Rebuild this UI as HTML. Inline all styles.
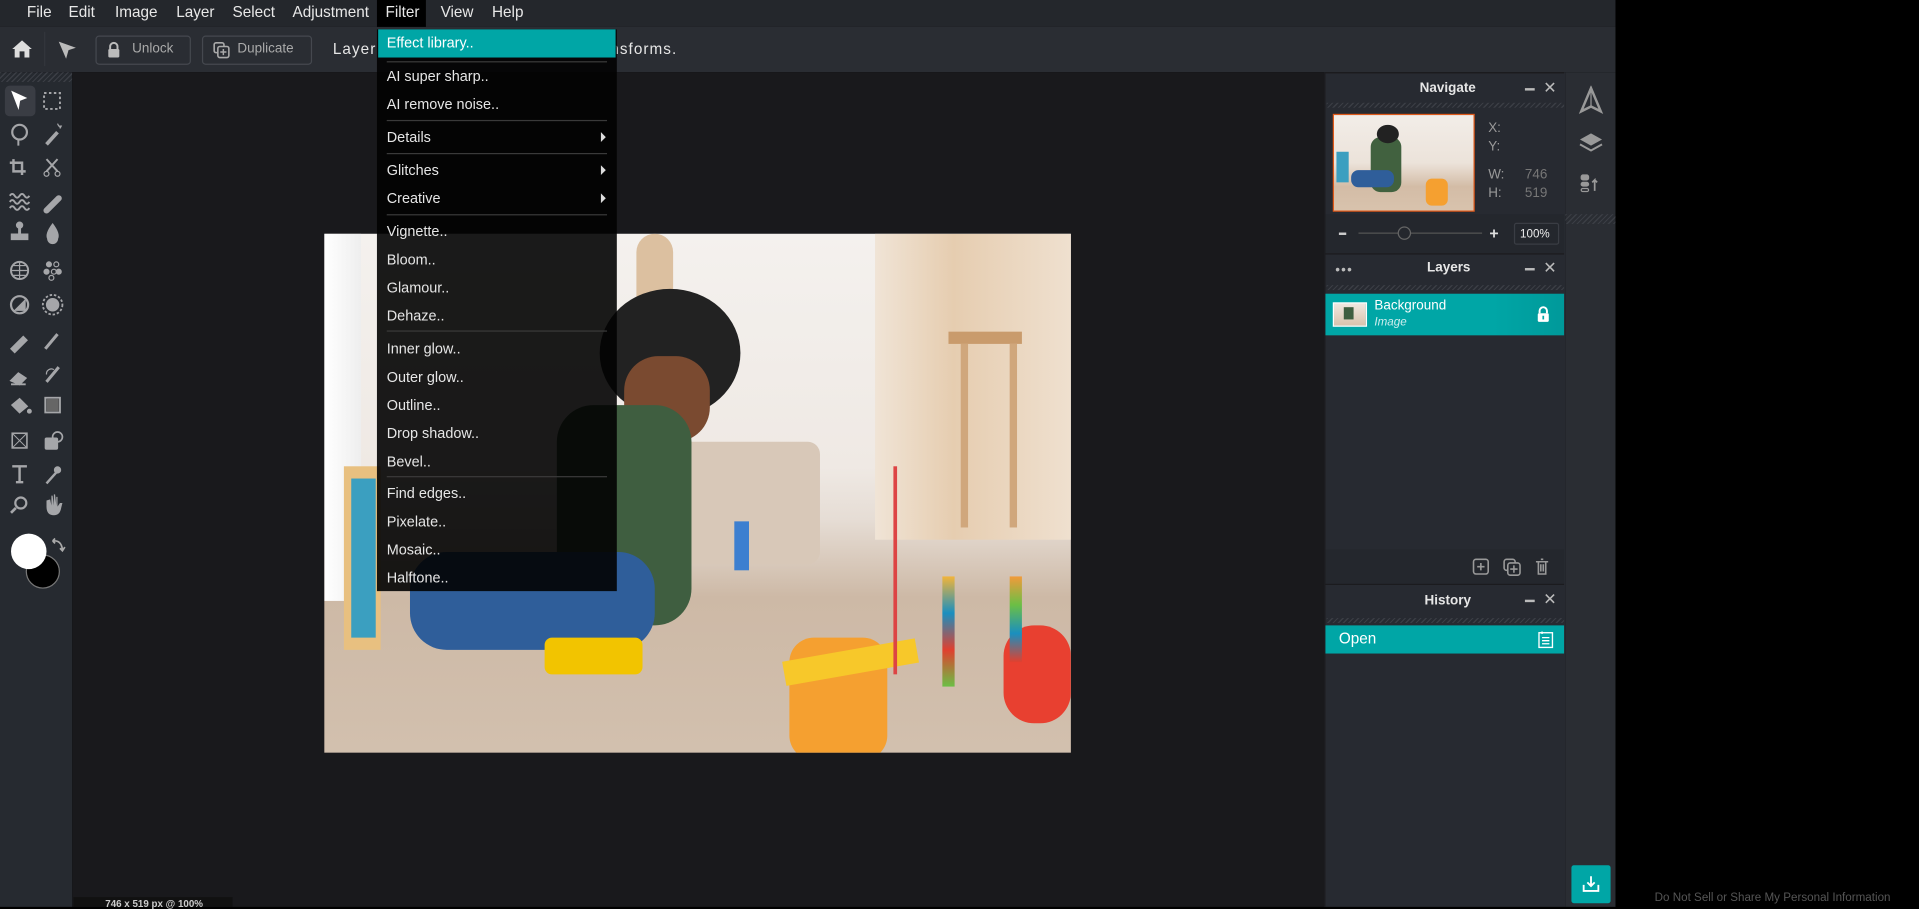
<!DOCTYPE html>
<html><head><meta charset="utf-8"><style>
*{margin:0;padding:0;box-sizing:border-box}
html,body{width:1919px;height:906px;overflow:hidden;background:#000}
#s{position:absolute;left:0;top:0;width:1568px;height:741px;transform:scale(1.22385);transform-origin:0 0;font-family:"Liberation Sans",sans-serif;color:#ddd;background:#000}
.a{position:absolute}
.menu span{position:absolute;top:3px;font-size:12.5px;color:#e8e8e8}
.fm div.i{position:absolute;left:8px;font-size:11.8px;color:#e6e6e6}
.fm .sep{position:absolute;left:8px;right:8px;height:1px;background:#3a3a3a}
.fm .ar{position:absolute;right:9px;width:0;height:0;border-left:4px solid #ddd;border-top:4px solid transparent;border-bottom:4px solid transparent}
.hatch{background:repeating-linear-gradient(135deg,#3b3e45 0 1px,transparent 1px 3px)}
.ph{position:absolute;font-size:11px;font-weight:bold;color:#e6e6e6}
</style></head><body><div id="s">
<div class="a menu" style="left:0;top:0;width:1320px;height:22px;background:#24272c">
<span style="left:22px">File</span><span style="left:56px">Edit</span><span style="left:94px">Image</span><span style="left:144px">Layer</span><span style="left:190px">Select</span><span style="left:239px">Adjustment</span>
<div class="a" style="left:308px;top:0;width:40px;height:24px;background:#000"></div><span style="left:315px">Filter</span><span style="left:360px">View</span><span style="left:402px">Help</span></div>
<div class="a" style="left:0;top:22px;width:1320px;height:37px;background:#2a2d33"></div>
<svg class="a" style="left:9px;top:31px" width="18" height="18" viewBox="0 0 18 18"><path d="M9 2L1 9h2v7h4v-5h4v5h4V9h2z" fill="#ddd"/></svg>
<div class="a" style="left:36px;top:26px;width:1px;height:28px;background:#33363c"></div>
<svg class="a" style="left:46px;top:32px" width="18" height="18" viewBox="0 0 18 18"><path d="M2 2l14 5-6 2-2 7z" fill="#bbb"/></svg>
<div class="a" style="left:78px;top:29px;width:78px;height:24px;border:1.5px solid #45484f;border-radius:3px"></div>
<svg class="a" style="left:87px;top:34px" width="12" height="14" viewBox="0 0 12 14"><path d="M3 6V4a3 3 0 016 0v2" stroke="#bbb" stroke-width="1.6" fill="none"/><rect x="1.5" y="6" width="9" height="7" rx="1" fill="#bbb"/></svg>
<div class="a" style="left:108px;top:34px;font-size:11px;color:#aaa">Unlock</div>
<div class="a" style="left:165px;top:29px;width:90px;height:24px;border:1.5px solid #45484f;border-radius:3px"></div>
<svg class="a" style="left:174px;top:34px" width="14" height="14" viewBox="0 0 14 14"><rect x="1" y="1" width="8" height="8" rx="1.5" stroke="#aaa" fill="none" stroke-width="1.3"/><rect x="4" y="4" width="9" height="9" rx="1.5" stroke="#aaa" fill="#2a2d33" stroke-width="1.3"/><path d="M8.5 6v5M6 8.5h5" stroke="#aaa" stroke-width="1.2"/></svg>
<div class="a" style="left:194px;top:34px;font-size:11px;color:#aaa">Duplicate</div>
<div class="a" style="left:272px;top:33px;font-size:12.5px;color:#e6e6e6;letter-spacing:0.85px">Layer is locked. Unlock layer for transforms.</div>
<div class="a" style="left:0;top:59px;width:59px;height:682px;background:#262a30"></div>
<div class="a hatch" style="left:0;top:59px;width:59px;height:8px"></div>
<div class="a" style="left:59px;top:59px;width:1024px;height:682px;background:#19191c"></div>
<div class="a" style="left:4px;top:70px;width:25px;height:25px;background:#3a3d44;border-radius:4px"></div>
<svg class="a" style="left:0;top:66px" width="59" height="430" viewBox="0 0 59 430" fill="#a5a6a9" stroke="#a5a6a9">
<path d="M10 9l11 5-5 2-1 6z" fill="#fff" stroke="#fff"/>
<rect x="36" y="10" width="13" height="13" fill="none" stroke-dasharray="2 2" stroke-width="1.6"/>
<circle cx="16" cy="42" r="6" fill="none" stroke-width="1.8"/><path d="M15 48v5" stroke-width="1.6"/>
<path d="M38 52l9-10" stroke-width="3"/><path d="M47 35l1 2 2 0-1 2" stroke-width="1"/>
<path d="M11 64v10h10M8 67h10v10" fill="none" stroke-width="2"/>
<path d="M38 64l9 10M47 64l-9 10" stroke-width="1.6"/><circle cx="38" cy="76" r="2" fill="none"/><circle cx="47" cy="76" r="2" fill="none"/>
<path d="M8 94q2-3 4 0t4 0 4 0 4 0M8 99q2-3 4 0t4 0 4 0 4 0M8 104q2-3 4 0t4 0 4 0 4 0" fill="none" stroke-width="1.5"/>
<path d="M38 106l10-10" stroke-width="5" stroke-linecap="round"/>
<path d="M16 118v7M10 126h12v3H10z" stroke-width="2.4"/><circle cx="16" cy="118" r="2.5"/>
<path d="M43 117q-6 8-4 12a4 4 0 008 0q2-4-4-12z"/>
<circle cx="16" cy="155" r="7" fill="none" stroke-width="1.6"/><path d="M9 155h14M16 148v14M11 151h10M11 159h10" stroke-width="1"/>
<circle cx="40" cy="150" r="2"/><circle cx="46" cy="150" r="2" fill="none"/><circle cx="38" cy="156" r="2"/><circle cx="44" cy="156" r="2" fill="none"/><circle cx="48" cy="156" r="2"/><circle cx="42" cy="161" r="2" fill="none"/>
<circle cx="16" cy="183" r="7" fill="none" stroke-width="1.8"/><path d="M11 188l10-10v10z" stroke="none"/>
<circle cx="43" cy="183" r="5"/><circle cx="43" cy="183" r="8" fill="none" stroke-dasharray="2 1.5" stroke-width="1.5"/>
<path d="M9 219l10-10 3 3-10 10z" stroke-width="1.2"/>
<path d="M37 219l10-12" stroke-width="2.5"/>
<path d="M9 245l6-6 6 4-5 5z" stroke-width="1.5"/><path d="M9 248h12" stroke-width="1.5"/>
<path d="M38 246l10-12" stroke-width="2.5"/><path d="M38 240a4 4 0 016-4" fill="none"/>
<path d="M10 265l6-5 6 6-6 5z" stroke-width="1.5"/><circle cx="24" cy="270" r="1.5"/>
<rect x="37" y="259" width="12" height="12" fill="none" stroke-width="1.5"/><rect x="38" y="260" width="10" height="10" stroke="none" fill="#666"/>
<rect x="10" y="288" width="12" height="12" fill="none" stroke-width="1.3"/><path d="M10 288l12 12M22 288l-12 12" stroke-width="0.8"/>
<rect x="37" y="292" width="10" height="9" rx="1"/><circle cx="47" cy="291" r="4" fill="none" stroke-width="1.4"/>
<path d="M10 315h12M16 315v13M13 328h6" stroke-width="2"/>
<path d="M38 329l8-9" stroke-width="2"/><circle cx="47" cy="318" r="2.5"/>
<circle cx="17" cy="345" r="4.5" fill="none" stroke-width="1.8"/><path d="M13 349l-4 4" stroke-width="2.2"/>
<path d="M38 343v5q0 7 6 7 5 0 6-6l1-4-2 0-2 3v-8h-1v7l-1-9h-1v9l-1-8h-1v8l-1-5z" stroke="none"/>
</svg>
<div class="a" style="left:21px;top:453px;width:28px;height:28px;border-radius:50%;background:#000;border:1.5px solid #777"></div>
<div class="a" style="left:9px;top:436px;width:29px;height:29px;border-radius:50%;background:#fff"></div>
<svg class="a" style="left:40px;top:439px" width="14" height="14" viewBox="0 0 14 14"><path d="M3 3q7-1 8 7M9 9l2 2 2-3M3 3l2-2M3 3l2 2" stroke="#aaa" fill="none" stroke-width="1.4"/></svg>
<div class="a" style="left:265px;top:191px;width:610px;height:424px;overflow:hidden;background:linear-gradient(180deg,#f4f1ee 0%,#efe9e4 45%,#e6ddd5 55%,#cdb9a6 70%,#d2c0ae 100%)">
<div class="a" style="left:0;top:0;width:30px;height:300px;background:linear-gradient(90deg,#fff,#eee)"></div>
<div class="a" style="left:225px;top:170px;width:180px;height:100px;background:#d8c8b8;border-radius:10px"></div>
<div class="a" style="left:450px;top:0;width:160px;height:250px;background:linear-gradient(90deg,#f0e4d6,#e6cdb0 40%,#efe0cf)"></div>
<div class="a" style="left:510px;top:80px;width:60px;height:10px;background:#c99b6c"></div>
<div class="a" style="left:520px;top:90px;width:6px;height:150px;background:#d0a77c"></div>
<div class="a" style="left:560px;top:90px;width:6px;height:150px;background:#d0a77c"></div>
<div class="a" style="left:255px;top:0;width:30px;height:60px;background:#dcc0a0;border-radius:15px 15px 0 0"></div>
<div class="a" style="left:16px;top:190px;width:30px;height:150px;background:#e8c080"></div>
<div class="a" style="left:22px;top:200px;width:20px;height:130px;background:#3b9fc0"></div>
<div class="a" style="left:225px;top:45px;width:115px;height:105px;background:#222;border-radius:50%"></div>
<div class="a" style="left:245px;top:100px;width:70px;height:70px;background:#7a4a30;border-radius:40%"></div>
<div class="a" style="left:190px;top:140px;width:110px;height:180px;background:#3f5e40;border-radius:30px"></div>
<div class="a" style="left:70px;top:260px;width:200px;height:80px;background:#2f5e9a;border-radius:30px"></div>
<div class="a" style="left:180px;top:330px;width:80px;height:30px;background:#f2c400;border-radius:6px"></div>
<div class="a" style="left:380px;top:330px;width:80px;height:100px;background:#f5a030;border-radius:20px"></div>
<div class="a" style="left:375px;top:340px;width:110px;height:20px;background:#f7c82a;transform:rotate(-10deg)"></div>
<div class="a" style="left:555px;top:320px;width:55px;height:80px;background:#e84030;border-radius:25px"></div>
<div class="a" style="left:465px;top:190px;width:3px;height:170px;background:#d44"></div>
<div class="a" style="left:505px;top:280px;width:10px;height:90px;background:linear-gradient(#f2b43a,#1a8fbf,#e0402f,#6bbf45)"></div>
<div class="a" style="left:560px;top:280px;width:10px;height:70px;background:linear-gradient(#f29a3a,#6bbf45,#1a8fbf,#e0402f)"></div>
<div class="a" style="left:335px;top:235px;width:12px;height:40px;background:#3c7fd0"></div>
</div>
<div class="a fm" style="left:308px;top:24px;width:196px;height:459px;background:rgba(2,2,2,0.9)">
<div class="a" style="left:1px;top:0;width:194px;height:23px;background:#00a6a6"></div>
<div class="i" style="top:4px;color:#fff">Effect library..</div>
<div class="sep" style="top:26px"></div>
<div class="i" style="top:31px">AI super sharp..</div>
<div class="i" style="top:54px">AI remove noise..</div>
<div class="sep" style="top:74px"></div>
<div class="i" style="top:81px">Details</div><div class="ar" style="top:84px"></div>
<div class="sep" style="top:101px"></div>
<div class="i" style="top:108px">Glitches</div><div class="ar" style="top:111px"></div>
<div class="i" style="top:131px">Creative</div><div class="ar" style="top:134px"></div>
<div class="sep" style="top:151px"></div>
<div class="i" style="top:158px">Vignette..</div>
<div class="i" style="top:181px">Bloom..</div>
<div class="i" style="top:204px">Glamour..</div>
<div class="i" style="top:227px">Dehaze..</div>
<div class="sep" style="top:246px"></div>
<div class="i" style="top:254px">Inner glow..</div>
<div class="i" style="top:277px">Outer glow..</div>
<div class="i" style="top:300px">Outline..</div>
<div class="i" style="top:323px">Drop shadow..</div>
<div class="i" style="top:346px">Bevel..</div>
<div class="sep" style="top:365px"></div>
<div class="i" style="top:372px">Find edges..</div>
<div class="i" style="top:395px">Pixelate..</div>
<div class="i" style="top:418px">Mosaic..</div>
<div class="i" style="top:441px">Halftone..</div>
</div>
<div class="a" style="left:60px;top:733px;width:130px;height:8px;background:#111"></div>
<div class="a" style="left:86px;top:734px;font-size:8px;color:#ccc;font-weight:bold">746 x 519 px @ 100%</div>
<div class="a" style="left:1082px;top:59px;width:197px;height:682px;background:#272a31;border-left:1px solid #1b1b1e"></div>
<div class="a" style="left:1083px;top:59px;width:195px;height:1px;background:#1b1b1e"></div>
<div class="ph" style="left:1160px;top:66px">Navigate</div>
<div class="a" style="left:1246px;top:72px;width:8px;height:1.5px;background:#bbb"></div>
<div class="a" style="left:1261px;top:64px;font-size:13px;color:#bbb">✕</div>
<div class="a hatch" style="left:1084px;top:84px;width:194px;height:4px"></div>
<div class="a" style="left:1089px;top:93px;width:116px;height:80px;border:1px solid #e05a1a;background:linear-gradient(180deg,#f2ede8 0%,#ece3da 50%,#d3bca6 75%,#d8c3ad 100%)">
<div class="a" style="left:30px;top:18px;width:25px;height:45px;background:#41613f;border-radius:8px"></div>
<div class="a" style="left:35px;top:8px;width:18px;height:15px;background:#222;border-radius:50%"></div>
<div class="a" style="left:14px;top:45px;width:35px;height:14px;background:#2f5e9a;border-radius:6px"></div>
<div class="a" style="left:75px;top:52px;width:18px;height:22px;background:#f5a030;border-radius:5px"></div>
<div class="a" style="left:2px;top:30px;width:10px;height:25px;background:#3b9fc0"></div>
</div>
<div class="a" style="left:1216px;top:98px;font-size:11px;color:#999;line-height:15px">X:<br>Y:</div>
<div class="a" style="left:1216px;top:136px;font-size:11px;color:#999;line-height:15px">W:<br>H:</div>
<div class="a" style="left:1246px;top:136px;font-size:11px;color:#777;line-height:15px">746<br>519</div>
<div class="a" style="left:1083px;top:175px;width:195px;height:32px;background:#24272d"></div>
<div class="a" style="left:1094px;top:190px;width:6px;height:1.5px;background:#ccc"></div>
<div class="a" style="left:1110px;top:190px;width:101px;height:1px;background:#555"></div>
<div class="a" style="left:1142px;top:185px;width:11px;height:11px;border-radius:50%;border:1px solid #666;background:#24272d"></div>
<div class="a" style="left:1217px;top:183px;font-size:13px;color:#ddd;font-weight:bold">+</div>
<div class="a" style="left:1237px;top:182px;width:37px;height:18px;border:1px solid #3a3d44;border-radius:2px;font-size:9.5px;color:#eee;padding:3px 0 0 4px">100%</div>
<div class="a" style="left:1083px;top:207px;width:195px;height:1px;background:#1b1b1e"></div>
<div class="a" style="left:1091px;top:215px;font-size:11px;color:#bbb;letter-spacing:1px">•••</div>
<div class="ph" style="left:1166px;top:213px">Layers</div>
<div class="a" style="left:1246px;top:219px;width:8px;height:1.5px;background:#bbb"></div>
<div class="a" style="left:1261px;top:211px;font-size:13px;color:#bbb">✕</div>
<div class="a hatch" style="left:1084px;top:233px;width:194px;height:4px"></div>
<div class="a" style="left:1083px;top:240px;width:195px;height:34px;background:linear-gradient(90deg,#00a6a6 70%,#00999a)"></div>
<div class="a" style="left:1089px;top:247px;width:28px;height:20px;border:1px solid #fff;background:linear-gradient(#f0e8e0,#d8c3ad)"><div class="a" style="left:8px;top:3px;width:8px;height:10px;background:#3f5e40"></div></div>
<div class="a" style="left:1123px;top:244px;font-size:11px;color:#fff">Background</div>
<div class="a" style="left:1123px;top:258px;font-size:9.5px;color:#cfeeee;font-style:italic">Image</div>
<svg class="a" style="left:1255px;top:250px" width="12" height="14" viewBox="0 0 12 14"><path d="M3 6V4a3 3 0 016 0v2" stroke="#fff" stroke-width="1.6" fill="none"/><rect x="1.5" y="6" width="9" height="7" rx="1" fill="#fff"/><rect x="5.3" y="8" width="1.4" height="3" fill="#00a6a6"/></svg>
<div class="a" style="left:1083px;top:449px;width:195px;height:28px;background:#24272d"></div>
<svg class="a" style="left:1202px;top:455px" width="70" height="16" viewBox="0 0 70 16" fill="none" stroke="#999" stroke-width="1.3"><rect x="2" y="2" width="12" height="12" rx="2"/><path d="M8 5v6M5 8h6"/><rect x="27" y="2" width="9" height="9" rx="2"/><rect x="30" y="5" width="10" height="10" rx="2" fill="#24272d"/><path d="M35 7v6M32 10h6"/><path d="M53 4h10M55 4v10h6V4M57 2h2M57 6v6M59 6v6"/></svg>
<div class="a" style="left:1083px;top:477px;width:195px;height:1px;background:#1b1b1e"></div>
<div class="ph" style="left:1164px;top:485px">History</div>
<div class="a" style="left:1246px;top:490px;width:8px;height:1.5px;background:#bbb"></div>
<div class="a" style="left:1261px;top:482px;font-size:13px;color:#bbb">✕</div>
<div class="a hatch" style="left:1084px;top:505px;width:194px;height:4px"></div>
<div class="a" style="left:1083px;top:511px;width:195px;height:23px;background:#00a6a6"></div>
<div class="a" style="left:1094px;top:515px;font-size:12.5px;color:#fff">Open</div>
<svg class="a" style="left:1256px;top:515px" width="14" height="15" viewBox="0 0 14 15" fill="none" stroke="#fff" stroke-width="1.1"><rect x="1.5" y="2" width="11" height="12"/><path d="M4 1v2M4 6h6M4 8.5h6M4 11h6"/></svg>
<div class="a" style="left:1279px;top:59px;width:41px;height:682px;background:#2a2d33"></div>
<div class="a hatch" style="left:1279px;top:175px;width:41px;height:8px"></div>
<svg class="a" style="left:1289px;top:70px" width="22" height="100" viewBox="0 0 22 100" fill="#999" stroke="#999">
<path d="M11 2L3 21l8-4 8 4z" fill="none" stroke-width="2"/><path d="M11 2v15" stroke-width="1"/>
<path d="M2 44l9-5 9 5-9 5z" stroke="none"/><path d="M2 48l9 5 9-5" fill="none" stroke-width="1.6"/>
<rect x="3" y="73" width="6" height="4" rx="1.5"/><rect x="3" y="79" width="6" height="3" rx="1.5"/><rect x="3" y="84" width="6" height="2.5" rx="1.2" fill="none"/><path d="M14 86v-9l-2 2M14 77l2 2" fill="none" stroke-width="1.4"/>
</svg>
<div class="a" style="left:1284px;top:707px;width:32px;height:31px;background:#00a6a6;border-radius:2px"></div>
<svg class="a" style="left:1292px;top:714px" width="16" height="16" viewBox="0 0 16 16" fill="none" stroke="#fff" stroke-width="1.5"><path d="M8 2v8M5 7l3 3 3-3M2 9v5h12V9"/></svg>
<div class="a" style="left:1352px;top:728px;font-size:9.5px;color:#555">Do Not Sell or Share My Personal Information</div>
</div></body></html>
